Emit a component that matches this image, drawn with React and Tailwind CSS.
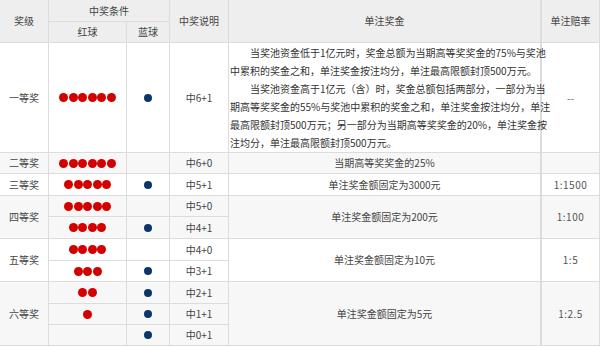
import React from 'react';

const font = { fontFamily: '"Noto Sans CJK SC", "Liberation Sans", sans-serif' };

const Red = ({ n }) => (
  <div className="flex justify-center gap-[0.5px]">
    {Array.from({ length: n }).map((_, i) => (
      <span key={i} className="w-[9px] h-[9px] rounded-full bg-[#d40000]" />
    ))}
  </div>
);

const Blue = () => (
  <div className="flex justify-center">
    <span className="w-[8px] h-[8px] rounded-full bg-[#0b366a]" />
  </div>
);

const td = 'p-0 border-r border-b border-[#dcdcdc] text-center align-middle';
const money = 'p-0 border-r-2 border-b border-[#dcdcdc] text-center align-middle';
const rate = `${td} tracking-[0.5px] text-[#555]`;

export default function App() {
  return (
    <div className="w-[600px] h-[346px] bg-white text-[10px] leading-[18px] text-[#444] overflow-hidden" style={font}>
      <table className="table-fixed border-separate border-spacing-0 w-[600px]">
        <colgroup>
          <col className="w-[49px]" />
          <col className="w-[78px]" />
          <col className="w-[43px]" />
          <col className="w-[59px]" />
          <col className="w-[313px]" />
          <col className="w-[58px]" />
        </colgroup>
        <thead className="bg-[#eeeeee]">
          <tr className="h-[22px]">
            <th rowSpan={2} className={`${td} font-normal`}>奖级</th>
            <th colSpan={2} className={`${td} font-normal`}>中奖条件</th>
            <th rowSpan={2} className={`${td} font-normal`}>中奖说明</th>
            <th rowSpan={2} className={`${money} font-normal`}>单注奖金</th>
            <th rowSpan={2} className={`${td} font-normal`}>单注赔率</th>
          </tr>
          <tr className="h-[21px]">
            <th className={`${td} font-normal`}>红球</th>
            <th className={`${td} font-normal`}>蓝球</th>
          </tr>
        </thead>
        <tbody>
          <tr className="h-[110px] bg-white">
            <td className={td}>一等奖</td>
            <td className={td}><Red n={6} /></td>
            <td className={td}><Blue /></td>
            <td className={td}>中6+1</td>
            <td className="p-0 pl-px border-r-2 border-b border-[#dcdcdc] text-left align-middle whitespace-nowrap text-[#333]">
              <div className="pl-[20px]">当奖池资金低于1亿元时，奖金总额为当期高等奖奖金的75%与奖池</div>
              <div>中累积的奖金之和，单注奖金按注均分，单注最高限额封顶500万元。</div>
              <div className="pl-[20px]">当奖池资金高于1亿元（含）时，奖金总额包括两部分，一部分为当</div>
              <div>期高等奖奖金的55%与奖池中累积的奖金之和，单注奖金按注均分，单注</div>
              <div>最高限额封顶500万元；另一部分为当期高等奖奖金的20%，单注奖金按</div>
              <div>注均分，单注最高限额封顶500万元。</div>
            </td>
            <td className={`${td} text-[#666]`}>--</td>
          </tr>
          <tr className="h-[21px] bg-[#f7f7f7]">
            <td className={td}>二等奖</td>
            <td className={td}><Red n={6} /></td>
            <td className={td}></td>
            <td className={td}>中6+0</td>
            <td className={money}>当期高等奖奖金的25%</td>
            <td className={td}></td>
          </tr>
          <tr className="h-[22px] bg-white">
            <td className={td}>三等奖</td>
            <td className={td}><Red n={5} /></td>
            <td className={td}><Blue /></td>
            <td className={td}>中5+1</td>
            <td className={money}>单注奖金额固定为3000元</td>
            <td className={rate}>1:1500</td>
          </tr>
          <tr className="h-[21px] bg-[#f7f7f7]">
            <td rowSpan={2} className={td}>四等奖</td>
            <td className={td}><Red n={5} /></td>
            <td className={td}></td>
            <td className={td}>中5+0</td>
            <td rowSpan={2} className={money}>单注奖金额固定为200元</td>
            <td rowSpan={2} className={rate}>1:100</td>
          </tr>
          <tr className="h-[22px] bg-[#f7f7f7]">
            <td className={td}><Red n={4} /></td>
            <td className={td}><Blue /></td>
            <td className={td}>中4+1</td>
          </tr>
          <tr className="h-[22px] bg-white">
            <td rowSpan={2} className={td}>五等奖</td>
            <td className={td}><Red n={4} /></td>
            <td className={td}></td>
            <td className={td}>中4+0</td>
            <td rowSpan={2} className={money}>单注奖金额固定为10元</td>
            <td rowSpan={2} className={rate}>1:5</td>
          </tr>
          <tr className="h-[21px] bg-white">
            <td className={td}><Red n={3} /></td>
            <td className={td}><Blue /></td>
            <td className={td}>中3+1</td>
          </tr>
          <tr className="h-[22px] bg-[#f7f7f7]">
            <td rowSpan={3} className={td}>六等奖</td>
            <td className={td}><Red n={2} /></td>
            <td className={td}><Blue /></td>
            <td className={td}>中2+1</td>
            <td rowSpan={3} className={money}>单注奖金额固定为5元</td>
            <td rowSpan={3} className={rate}>1:2.5</td>
          </tr>
          <tr className="h-[21px] bg-[#f7f7f7]">
            <td className={td}><Red n={1} /></td>
            <td className={td}><Blue /></td>
            <td className={td}>中1+1</td>
          </tr>
          <tr className="h-[21px] bg-[#f7f7f7]">
            <td className={td}></td>
            <td className={td}><Blue /></td>
            <td className={td}>中0+1</td>
          </tr>
        </tbody>
      </table>
    </div>
  );
}
